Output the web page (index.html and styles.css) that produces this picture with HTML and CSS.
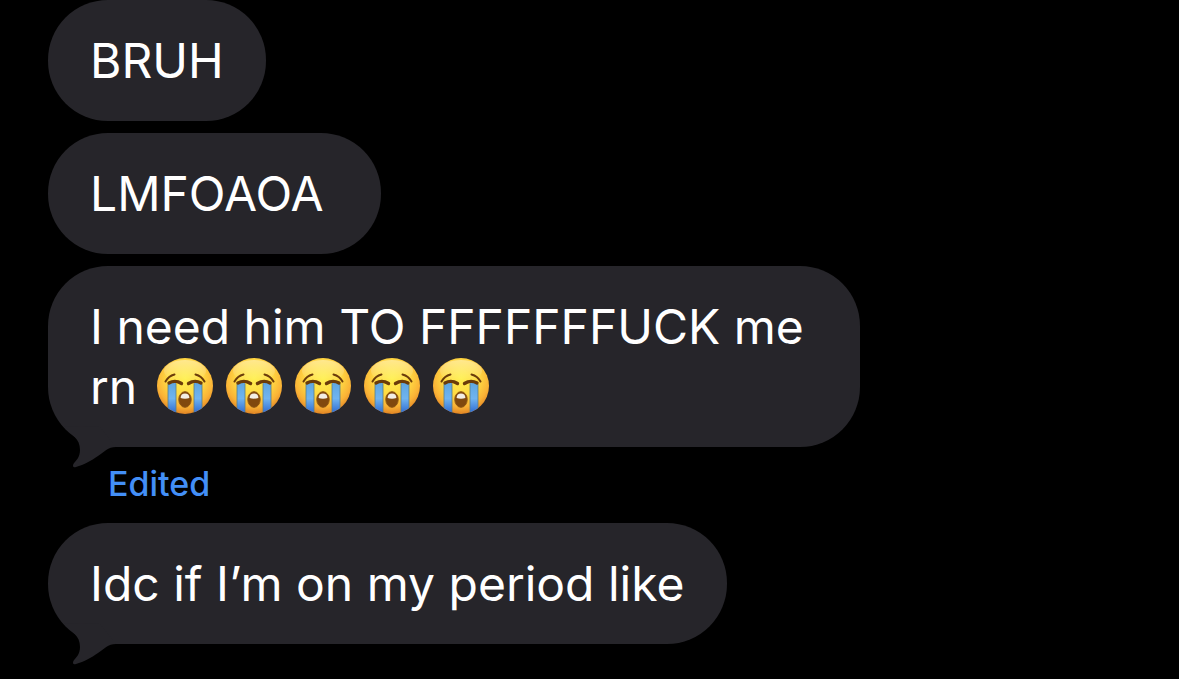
FILE: index.html
```
<!DOCTYPE html>
<html lang="en">
<head>
    <meta charset="UTF-8">
    <meta name="viewport" content="width=device-width, initial-scale=1">
    <title>Messages</title>
    <link rel="stylesheet" href="styles.css">
</head>
<body>
    <!-- shared shapes -->
    <svg class="sprite" aria-hidden="true">
        <defs>
            <radialGradient id="face" cx="50%" cy="36%" r="64%">
                <stop offset="0" stop-color="#fff04f"/>
                <stop offset="0.5" stop-color="#ffd943"/>
                <stop offset="0.8" stop-color="#fab236"/>
                <stop offset="1" stop-color="#e08424"/>
            </radialGradient>
            <linearGradient id="shine" x1="0" y1="0" x2="0" y2="1">
                <stop offset="0" stop-color="#fff" stop-opacity="0.4"/>
                <stop offset="1" stop-color="#fff" stop-opacity="0"/>
            </linearGradient>
            <linearGradient id="tear" x1="0" y1="0" x2="0" y2="1">
                <stop offset="0" stop-color="#5fa6e0"/>
                <stop offset="0.5" stop-color="#70b4f0"/>
                <stop offset="1" stop-color="#2a66d0"/>
            </linearGradient>
            <clipPath id="face-clip"><circle cx="28" cy="28" r="28"/></clipPath>
        </defs>
        <symbol id="crying" viewBox="0 0 56 56">
            <circle cx="28" cy="28" r="28" fill="url(#face)"/>
            <ellipse cx="28" cy="13" rx="21" ry="11" fill="url(#shine)"/>
            <g clip-path="url(#face-clip)">
                <path d="M11 25H19V56H11Z" fill="url(#tear)"/>
                <path d="M37 25H45V56H37Z" fill="url(#tear)"/>
                <path d="M11 26V56M19 26V56M37 26V56M45 26V56" stroke="#5b7f86" stroke-width="0.8" fill="none"/>
            </g>
            <g fill="none" stroke="#6b3c0a" stroke-linecap="round">
                <path d="M8.500 23.500C10.500 19.800 13.500 17.500 17.500 16.500M47.500 23.500C45.500 19.800 42.500 17.500 38.500 16.500" stroke-width="2"/>
                <path d="M12 25C16 22.800 20.500 23 24.500 25.500M44 25C40 22.800 35.500 23 31.500 25.500" stroke-width="3.4"/>
            </g>
            <ellipse cx="28" cy="41.500" rx="6.200" ry="7.800" fill="#80480e" stroke="#8a5210" stroke-width="1"/>
            <path d="M23.600 40C23.600 36.800 25.400 35.400 28 35.400C30.600 35.400 32.400 36.800 32.400 40C30 41 26 41 23.600 40Z" fill="#f3eee4"/>
        </symbol>
        <symbol id="tail" viewBox="0 0 56 44">
            <path d="M3 1C12 11 20 13 20 25C20 32 16 36 14 38C12 41 13 43 16 42C24 40 32 35 38 31C44 27 48 22 56 22L40 2Z" fill="#26252a"/>
        </symbol>
    </svg>

    <main class="chat">
        <div class="bubble">BRUH</div>
        <div class="bubble bubble-roomy">LMFOAOA</div>
        <div class="bubble">
            I need him TO FFFFFFFUCK me rn
            <span class="emojis" role="img" aria-label="Loudly crying faces">
                <svg class="emoji"><use href="#crying"/></svg>
                <svg class="emoji"><use href="#crying"/></svg>
                <svg class="emoji"><use href="#crying"/></svg>
                <svg class="emoji"><use href="#crying"/></svg>
                <svg class="emoji"><use href="#crying"/></svg>
            </span>
            <svg class="tail" aria-hidden="true"><use href="#tail"/></svg>
        </div>
        <button type="button" class="edited">Edited</button>
        <div class="bubble">
            Idc if I’m on my period like
            <svg class="tail" aria-hidden="true"><use href="#tail"/></svg>
        </div>
    </main>
</body>
</html>
```
FILE: styles.css
```
body {
    margin: 0;
    background-color: #000;
    color: #fff;
    font-family: Inter, "Liberation Sans", sans-serif;
}

.sprite {
    position: absolute;
    width: 0;
    height: 0;
}

.chat {
    display: flex;
    flex-direction: column;
    align-items: flex-start;
    gap: 12px;
    padding: 0 48px 35px;
}

.bubble {
    position: relative;
    box-sizing: border-box;
    max-width: 75%;
    padding: 31px 42px 30px;
    border-radius: 60px;
    background-color: #26252a;
    font-size: 48px;
    line-height: 60px;
}

.bubble-roomy {
    padding-right: 57px;
}

/* the little hook at the bottom left */
.tail {
    position: absolute;
    left: 12px;
    bottom: -22px;
    width: 56px;
    height: 44px;
}

.emojis {
    display: inline-flex;
    gap: 13px;
    margin-left: 6px;
    vertical-align: -10px;
}

.emoji {
    width: 56px;
    height: 56px;
}

.edited {
    margin: 8px 0 10px 60px;
    padding: 0;
    border: none;
    background: none;
    color: #438ff7;
    font-family: inherit;
    font-size: 34px;
    font-weight: 500;
    line-height: 34px;
    cursor: pointer;
}
```
